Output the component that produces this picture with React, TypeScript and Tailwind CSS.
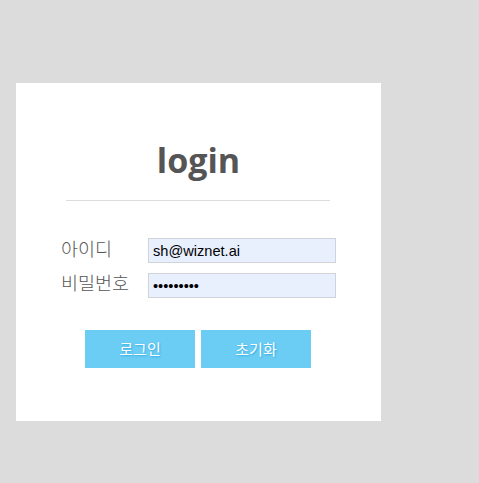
import React from "react";

export default function App() {
  return (
    <div className="min-h-[483px] w-full bg-[#dcdcdc] pt-[83px] pl-[16px]">
      <div className="w-[365px] h-[338px] bg-white pt-[60px] flex flex-col">
        <h1
          className="text-center text-[34px] leading-[34px] font-bold text-[#555555]"
          style={{ fontFamily: '"Open Sans", sans-serif' }}
        >
          login
        </h1>
        <div className="ml-[50px] mt-[23px] h-px w-[264px] bg-[#dddddd]" />
        <div
          className="mt-[37px] flex flex-col gap-[10px] pl-[45px]"
          style={{ fontFamily: '"Noto Sans CJK KR", sans-serif' }}
        >
          <div className="flex items-start">
            <label className="w-[87px] text-[18.5px] leading-[18px] mt-[1px] text-[#555555] font-light">
              아이디
            </label>
            <input
              type="text"
              defaultValue="sh@wiznet.ai"
              className="w-[188px] h-[25px] border border-[#d0d4da] bg-[#e8f0fe] pl-[4px] text-[14.6px] text-black outline-none"
              style={{ fontFamily: '"Liberation Sans", Arial, sans-serif' }}
            />
          </div>
          <div className="flex items-start">
            <label className="w-[87px] text-[18.5px] leading-[18px] mt-[0px] text-[#555555] font-light">
              비밀번호
            </label>
            <input
              type="password"
              defaultValue="123456789"
              className="w-[188px] h-[25px] border border-[#d0d4da] bg-[#e8f0fe] pl-[4px] text-[14.6px] text-black outline-none"
              style={{ fontFamily: '"Liberation Sans", Arial, sans-serif' }}
            />
          </div>
        </div>
        <div
          className="mt-[32px] flex gap-[6px] pl-[69px]"
          style={{ fontFamily: '"Noto Sans CJK KR", sans-serif' }}
        >
          <button className="w-[110px] h-[38px] bg-[#6ccdf4] text-white text-[15px] [text-shadow:1px_1px_2px_#2fa8e0]">
            로그인
          </button>
          <button className="w-[110px] h-[38px] bg-[#6ccdf4] text-white text-[15px] [text-shadow:1px_1px_2px_#2fa8e0]">
            초기화
          </button>
        </div>
      </div>
    </div>
  );
}
